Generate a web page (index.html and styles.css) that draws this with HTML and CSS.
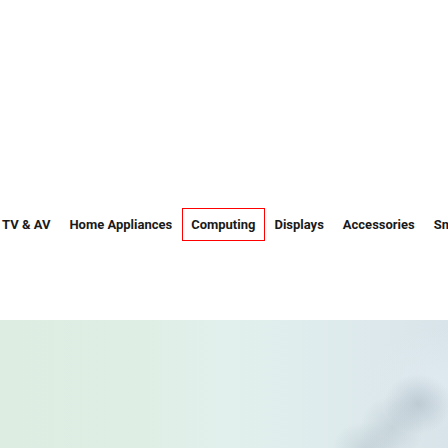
FILE: index.html
```html
<!DOCTYPE html>
<html lang="en">
<head>
<meta charset="utf-8">
<title>Products</title>
<link rel="stylesheet" href="styles.css">
</head>
<body>
<div class="page">
  <nav class="tabs">
    <a class="tab">TV &amp; AV</a>
    <a class="tab">Home Appliances</a>
    <a class="tab active">Computing</a>
    <a class="tab">Displays</a>
    <a class="tab">Accessories</a>
    <a class="tab">Smart Things</a>
  </nav>
  <div class="hero"></div>
</div>
</body>
</html>
```
FILE: styles.css
```css
html, body {
  margin: 0;
  padding: 0;
  background: #fff;
}
.page {
  width: 448px;
  height: 448px;
  overflow: hidden;
  padding-top: 208px;
  box-sizing: border-box;
  font-family: Roboto, "Noto Sans", sans-serif;
}
.tabs {
  display: flex;
  margin-left: -7.5px;
  white-space: nowrap;
}
.tab {
  flex: none;
  display: block;
  height: 33px;
  line-height: 31px;
  padding: 0 8.5px;
  border: 1px solid transparent;
  box-sizing: border-box;
  font-size: 13px;
  font-weight: 700;
  color: #1a1a1a;
}
.tab.active {
  border-color: #ff0000;
}
.hero {
  margin-top: 79px;
  height: 128px;
  background:
    radial-gradient(ellipse 34px 30px at 418px 84px, rgba(160,175,186,0.5), rgba(160,175,186,0) 100%),
    radial-gradient(ellipse 32px 32px at 392px 108px, rgba(165,180,190,0.38), rgba(165,180,190,0) 100%),
    radial-gradient(ellipse 34px 26px at 366px 128px, rgba(165,180,190,0.38), rgba(165,180,190,0) 100%),
    radial-gradient(ellipse 70px 50px at 440px 60px, rgba(225,235,242,0.7), rgba(225,235,242,0) 100%),
    linear-gradient(90deg, #deede2 0%, #dfeee4 30%, #e1f0ec 50%, #dfeced 70%, #d9e4ea 100%);
}
```
